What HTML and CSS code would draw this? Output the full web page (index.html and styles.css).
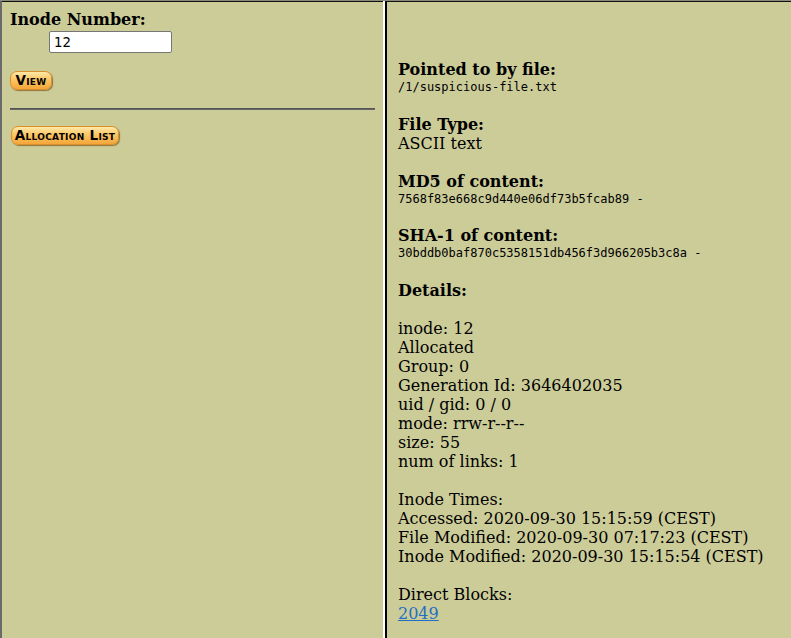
FILE: index.html
```html
<!DOCTYPE html>
<html>
<head>
<meta charset="utf-8">
<title>Inode</title>
<link rel="stylesheet" href="styles.css">
</head>
<body>
<div class="frames">
  <div class="left">
    <div class="label">Inode Number:</div>
    <div class="input-row"><input class="inode-input" type="text" value="12"></div>
    <div class="btn-row"><span class="btn btn-view">View</span></div>
    <hr class="rule">
    <div class="btn-row2"><span class="btn btn-alloc">Allocation List</span></div>
  </div>
  <div class="right">
    <div class="head">Pointed to by file:</div>
    <div class="mono">/1/suspicious-file.txt</div>
    <div class="blank"></div>
    <div class="head">File Type:</div>
    <div>ASCII text</div>
    <div class="blank"></div>
    <div class="head">MD5 of content:</div>
    <div class="mono">7568f83e668c9d440e06df73b5fcab89 -</div>
    <div class="blank"></div>
    <div class="head">SHA-1 of content:</div>
    <div class="mono">30bddb0baf870c5358151db456f3d966205b3c8a -</div>
    <div class="blank"></div>
    <div class="head">Details:</div>
    <div class="blank"></div>
    <div>inode: 12</div>
    <div>Allocated</div>
    <div>Group: 0</div>
    <div>Generation Id: 3646402035</div>
    <div>uid / gid: 0 / 0</div>
    <div>mode: rrw-r--r--</div>
    <div>size: 55</div>
    <div>num of links: 1</div>
    <div class="blank"></div>
    <div>Inode Times:</div>
    <div>Accessed: 2020-09-30 15:15:59 (CEST)</div>
    <div>File Modified: 2020-09-30 07:17:23 (CEST)</div>
    <div>Inode Modified: 2020-09-30 15:15:54 (CEST)</div>
    <div class="blank"></div>
    <div>Direct Blocks:</div>
    <div><a class="blk" href="#">2049</a></div>
  </div>
</div>
</body>
</html>
```

FILE: styles.css
```css
html, body {
  margin: 0;
  padding: 0;
}
body {
  background: #cccc99;
  font-family: "DejaVu Serif", serif;
  font-size: 16px;
  color: #000;
  overflow: hidden;
}
.frames {
  display: flex;
  height: 638px;
  box-sizing: border-box;
  border-top: 1px solid #8a8a7a;
  box-shadow: inset 0 1px 0 #111;
}
.left {
  box-sizing: border-box;
  border-left: 2px solid #6a6a6a;
  border-right: 2px solid #ffffff;
  padding: 9px 8px 0 8px;
  width: 385px;
  flex: none;
}
.right {
  flex: 1;
  border-left: 2px solid #000;
  padding: 59px 0 0 11px;
  line-height: 19px;
}
.head {
  font-weight: bold;
}
.blank {
  height: 19px;
}
.label {
  font-weight: bold;
}
.input-row {
  margin: 2px 0 0 39px;
  display: flex;
}
.inode-input {
  width: 123px;
  height: 22px;
  box-sizing: border-box;
  border: 1px solid #767676;
  border-radius: 2px;
  padding: 1px 4px;
  font-family: "DejaVu Sans", sans-serif;
  font-size: 13.33px;
  background: #fff;
  color: #000;
  margin: 0;
}
.btn-row {
  margin-top: 18px;
  display: flex;
}
.btn-row2 {
  margin-top: 16px;
  display: flex;
}
.btn {
  display: inline-block;
  height: 19px;
  line-height: 17px;
  box-sizing: border-box;
  border-radius: 7px;
  background: linear-gradient(#ffe9a8 0%, #fcc96a 40%, #f4a638 100%);
  border: 1px solid #d9902c;
  box-shadow: 1px 1px 1px rgba(120, 80, 20, 0.7);
  font-family: "DejaVu Sans", sans-serif;
  font-weight: bold;
  font-variant: small-caps;
  font-size: 13.5px;
  letter-spacing: 0.3px;
  color: #000;
  text-align: center;
  white-space: nowrap;
}
.btn-view {
  width: 42px;
}
.btn-alloc {
  width: 108px;
  margin-left: 1px;
}
.rule {
  margin: 18px 0 0 0;
  height: 0;
  border: none;
  border-top: 1px solid #555;
  border-bottom: 1px solid #666;
}
.mono {
  font-family: "DejaVu Sans Mono", monospace;
  font-size: 12px;
  line-height: 16.5px;
}
.blk {
  color: #1f6fc5;
}
```
